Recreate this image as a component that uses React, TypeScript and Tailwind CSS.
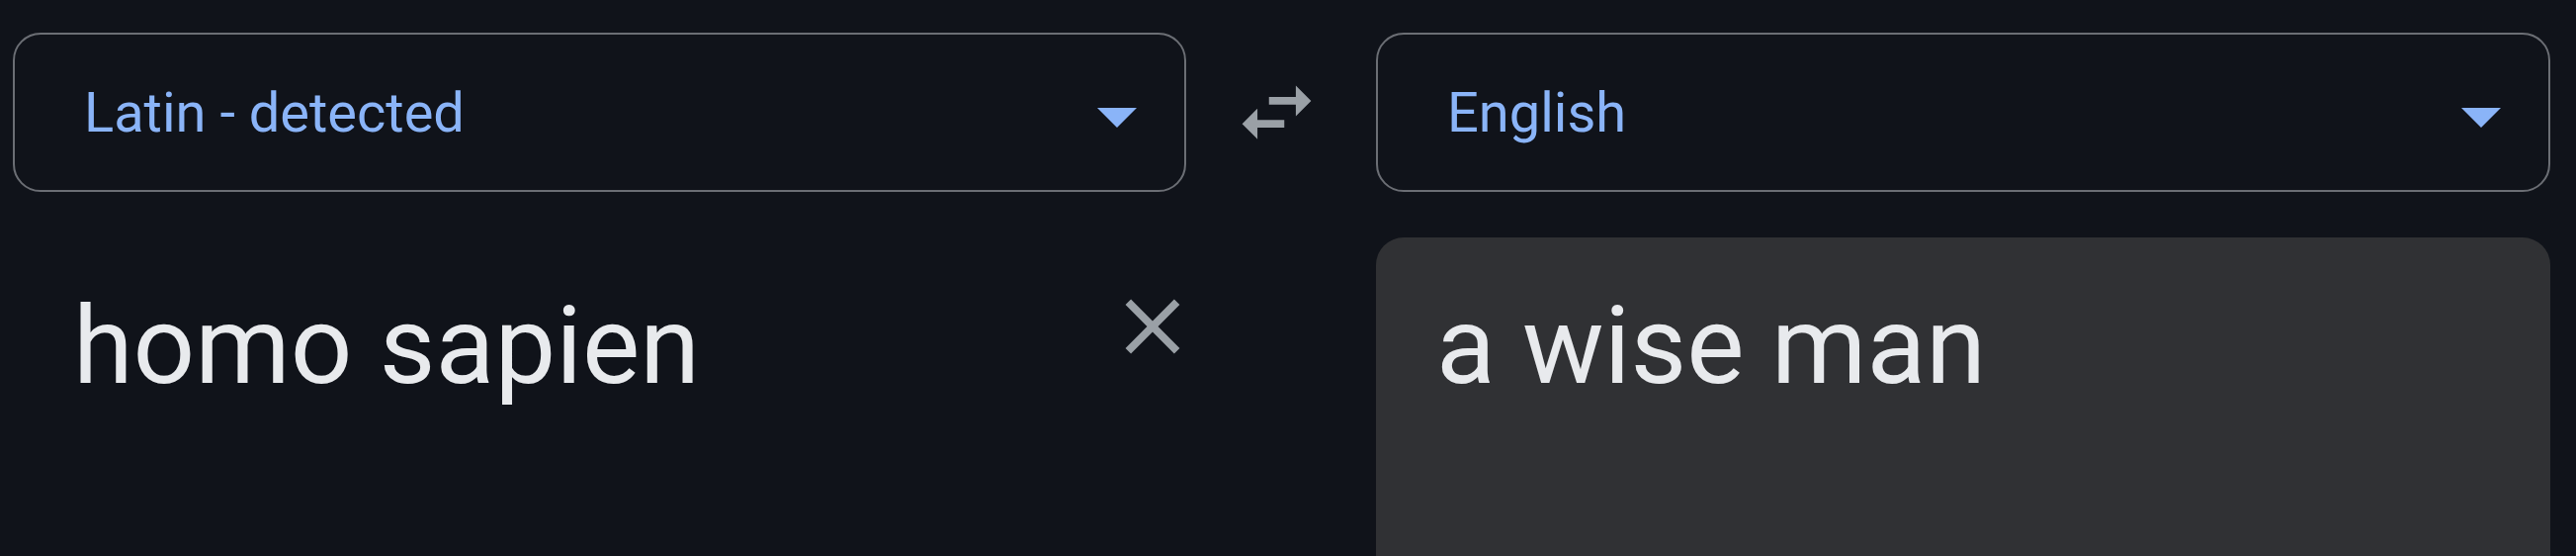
import React from "react";

const Caret = () => (
  <svg width="40" height="20" viewBox="0 0 40 20" className="mt-[11px] shrink-0">
    <path d="M0 0h40L20 20z" fill="#8ab4f8" />
  </svg>
);

const LangSelect = ({ label }: { label: string }) => (
  <div className="h-[161px] border-2 border-[#6b6e74] rounded-[28px] flex items-center justify-between pl-[70px] pr-[48px]">
    <span className="text-[56px] leading-none text-[#8ab4f8]">{label}</span>
    <Caret />
  </div>
);

const App = () => {
  return (
    <div className="w-[2606px] h-[562px] overflow-hidden bg-[#10131a] flex pl-[13px] pr-[26px] pt-[33px] font-['Roboto',sans-serif]">
      {/* source side */}
      <div className="w-[1187px] flex flex-col shrink-0">
        <LangSelect label="Latin - detected" />
        <div className="mt-[46px] flex justify-between pt-[55px] pl-[61px]">
          <div className="text-[110px] leading-none text-[#e8eaed]">homo sapien</div>
          <svg width="94" height="94" viewBox="0 0 24 24" className="mt-[-12px] mr-[-13px] shrink-0">
            <path
              d="M19 6.41L17.59 5 12 10.59 6.41 5 5 6.41 10.59 12 5 17.59 6.41 19 12 13.41 17.59 19 19 17.59 13.41 12z"
              fill="#9aa0a6"
            />
          </svg>
        </div>
      </div>

      {/* swap */}
      <div className="w-[192px] shrink-0">
        <svg width="93" height="93" viewBox="0 0 24 24" className="ml-[45px] mt-[34px]">
          <path d="M6.99 11L3 15l3.99 4v-3H14v-2H6.99v-3zM21 9l-3.99-4v3H10v2h7.01v3L21 9z" fill="#9aa0a6" />
        </svg>
      </div>

      {/* target side */}
      <div className="w-[1188px] flex flex-col shrink-0">
        <LangSelect label="English" />
        <div className="mt-[46px] flex-1 bg-[#303134] rounded-t-[28px] pt-[55px] pl-[61px]">
          <div className="text-[110px] leading-none text-[#e8eaed]">a wise man</div>
        </div>
      </div>
    </div>
  );
};

export default App;
